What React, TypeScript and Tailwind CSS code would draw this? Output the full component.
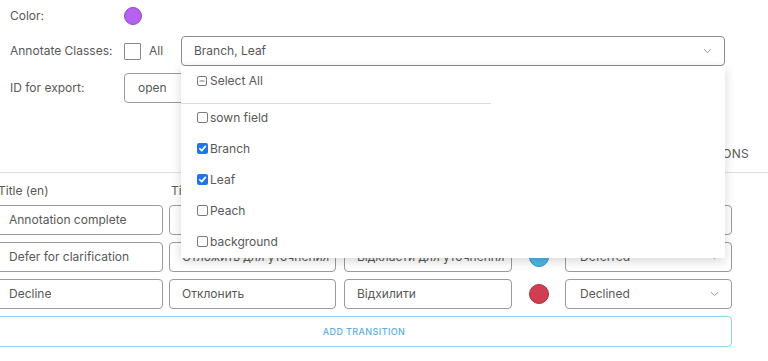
import React from "react";

function Box({ checked }: { checked?: boolean }) {
  if (checked) {
    return (
      <span className="w-[11px] h-[11px] rounded-[2px] bg-[#1f76e8] flex items-center justify-center shrink-0">
        <svg width="9" height="9" viewBox="0 0 10 10">
          <path d="M2 5.3 L4.1 7.4 L8.2 2.6" stroke="white" strokeWidth="1.9" fill="none" strokeLinecap="round" strokeLinejoin="round" />
        </svg>
      </span>
    );
  }
  return <span className="w-[11px] h-[11px] rounded-[2px] border border-[#7a7a7a] bg-white shrink-0" />;
}

function Chevron() {
  return (
    <svg width="9" height="6" viewBox="0 0 9 6" className="shrink-0">
      <path d="M1 1.2 L4.5 4.6 L8 1.2" stroke="#9a9a9a" strokeWidth="1" fill="none" />
    </svg>
  );
}

function Input({ text, w }: { text: string; w: string }) {
  return (
    <div className={`${w} h-[30px] shrink-0 border border-[#9a9a9a] rounded-[4px] flex items-center pl-[12px] whitespace-nowrap overflow-hidden`}>
      {text}
    </div>
  );
}

function Row({ en, ru, uk, color, status }: { en: string; ru: string; uk: string; color: string; status: string }) {
  return (
    <div className="flex items-center h-[30px]">
      <Input text={en} w="w-[167px]" />
      <div className="ml-[6px]">
        <Input text={ru} w="w-[167px]" />
      </div>
      <div className="ml-[8px]">
        <Input text={uk} w="w-[168px]" />
      </div>
      <div className="w-[53px] flex justify-center shrink-0">
        <span className={`w-[20px] h-[20px] rounded-full border ${color}`} />
      </div>
      <div className="w-[167px] h-[30px] shrink-0 border border-[#9a9a9a] rounded-[4px] flex items-center justify-between pl-[14px] pr-[12px]">
        <span>{status}</span>
        <Chevron />
      </div>
    </div>
  );
}

export default function App() {
  const items: [string, boolean][] = [
    ["sown field", false],
    ["Branch", true],
    ["Leaf", true],
    ["Peach", false],
    ["background", false],
  ];
  return (
    <div className="w-[768px] h-[361px] overflow-hidden bg-white relative text-[12px] text-[#585858] font-['Inter','Open_Sans',sans-serif]">
      <div className="pl-[10px]">
        <div className="flex items-center h-[32px]">
          <span className="w-[114px]">Color:</span>
          <span className="w-[18px] h-[18px] rounded-full bg-[#b462ef] border border-[#9148c4]" />
        </div>
        <div className="flex items-center h-[30px] mt-[4px]">
          <span className="w-[114px]">Annotate Classes:</span>
          <span className="w-[17px] h-[17px] border border-[#8a8a8a] rounded-[1px] shrink-0" />
          <span className="ml-[8px] w-[32px]">All</span>
          <div className="relative w-[544px] h-[30px] z-10">
            <div className="h-full border border-[#8c8c8c] rounded-[4px] flex items-center justify-between pl-[12px] pr-[12px] bg-white">
              <span>Branch, Leaf</span>
              <Chevron />
            </div>
            <div className="absolute left-0 top-full w-[544px] h-[192px] bg-white shadow-[0_3px_10px_rgba(0,0,0,0.16)]">
              <div className="w-[310px] h-[38px] border-b border-[#dcdcdc] pl-[16px] pt-[7px]">
                <div className="flex items-center gap-[3px] h-[16px]">
                  <svg width="10" height="10" viewBox="0 0 10 10" className="shrink-0">
                    <rect x="0.5" y="0.5" width="9" height="9" rx="1.5" fill="none" stroke="#777" strokeWidth="1" />
                    <path d="M2.5 5 H7.5" stroke="#777" strokeWidth="1" />
                  </svg>
                  <span>Select All</span>
                </div>
              </div>
              <div className="-mt-[2px] pl-[16px]">
                {items.map(([label, c]) => (
                  <div key={label} className="h-[31px] flex items-center gap-[2px]">
                    <Box checked={c} />
                    <span>{label}</span>
                  </div>
                ))}
              </div>
            </div>
          </div>
        </div>
        <div className="flex items-center h-[30px] mt-[7px]">
          <span className="w-[114px]">ID for export:</span>
          <div className="w-[200px] h-[30px] border border-[#9a9a9a] rounded-[4px] flex items-center pl-[13px]">open</div>
        </div>
      </div>

      <div className="mt-[33px] h-[37px] border-b border-[#dedede] flex items-center justify-end pr-[19px] text-[12px] tracking-[0.3px]">
        TRANSITIONS
      </div>

      <div className="-ml-[4px]">
        <div className="flex items-center h-[32px] pt-[3px]">
          <span className="w-[173px] pl-[2px] shrink-0">Title (en)</span>
          <span className="w-[175px] pl-[2px] shrink-0">Title (ru)</span>
          <span className="w-[221px] pl-[2px] shrink-0">Title (uk)</span>
          <span className="pl-[2px]">Status</span>
        </div>
        <div className="flex flex-col gap-[7px]">
          <Row en="Annotation complete" ru="Аннотация завершена" uk="Анотацію завершено" color="bg-[#3fb66b] border-[#2f8f54]" status="Completed" />
          <Row en="Defer for clarification" ru="Отложить для уточнения" uk="Відкласти для уточнення" color="bg-[#4cb6ea] border-[#3592c2]" status="Deferred" />
          <Row en="Decline" ru="Отклонить" uk="Відхилити" color="bg-[#d03f4f] border-[#a8303d]" status="Declined" />
          <div className="w-[736px] h-[31px] border border-[#8fd4f4] rounded-[4px] flex items-center justify-center text-[9px] font-medium tracking-[0.4px] text-[#5aaee6]">
            ADD TRANSITION
          </div>
        </div>
      </div>
    </div>
  );
}
